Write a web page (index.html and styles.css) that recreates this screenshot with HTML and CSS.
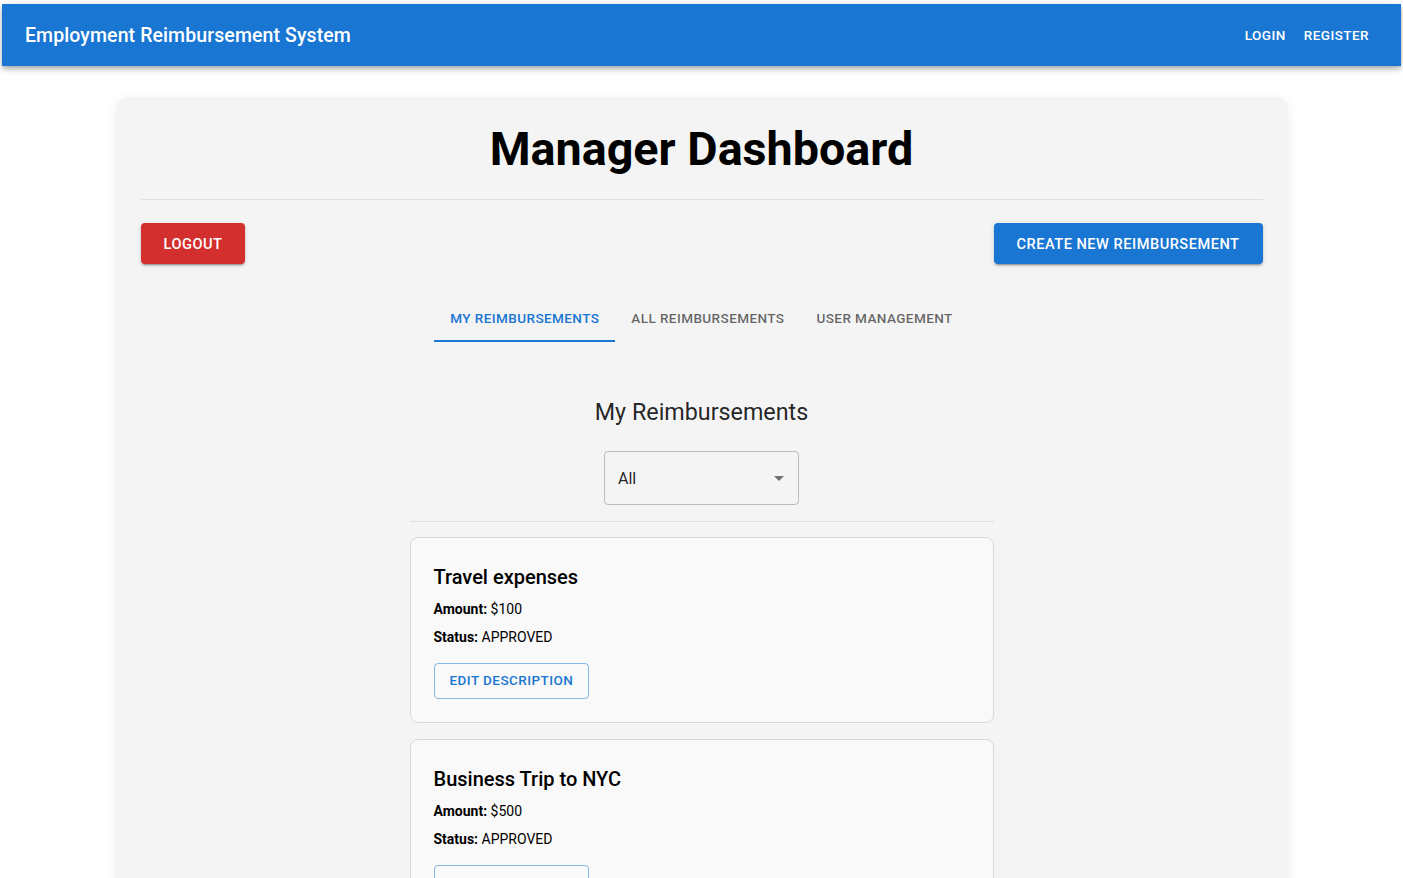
FILE: index.html
```html
<!DOCTYPE html>
<html lang="en">
<head>
<meta charset="utf-8">
<title>Manager Dashboard</title>
<link rel="stylesheet" href="styles.css">
</head>
<body>
<header class="appbar">
  <div class="brand">Employment Reimbursement System</div>
  <nav class="nav">
    <a class="nav-btn">LOGIN</a>
    <a class="nav-btn">REGISTER</a>
  </nav>
</header>
<main class="paper">
  <h1 class="page-title">Manager Dashboard</h1>
  <hr class="divider">
  <div class="actions">
    <button class="btn btn-red">LOGOUT</button>
    <button class="btn btn-blue">CREATE NEW REIMBURSEMENT</button>
  </div>
  <div class="tabs">
    <div class="tab active">MY REIMBURSEMENTS</div>
    <div class="tab">ALL REIMBURSEMENTS</div>
    <div class="tab">USER MANAGEMENT</div>
  </div>
  <section class="list">
    <h2 class="section-title">My Reimbursements</h2>
    <div class="select-wrap">
      <div class="select">
        <span>All</span>
        <svg class="caret" width="24" height="24" viewBox="0 0 24 24"><path d="M7 10l5 5 5-5z" fill="rgba(0,0,0,0.54)"/></svg>
      </div>
    </div>
    <hr class="divider list-divider">
    <div class="card">
      <div class="card-title">Travel expenses</div>
      <p class="line first"><b>Amount:</b> $100</p>
      <p class="line"><b>Status:</b> APPROVED</p>
      <button class="btn-outline">EDIT DESCRIPTION</button>
    </div>
    <div class="card">
      <div class="card-title">Business Trip to NYC</div>
      <p class="line first"><b>Amount:</b> $500</p>
      <p class="line"><b>Status:</b> APPROVED</p>
      <button class="btn-outline">EDIT DESCRIPTION</button>
    </div>
  </section>
</main>
</body>
</html>
```

FILE: styles.css
```css
* { box-sizing: border-box; }
html, body { margin: 0; padding: 0; background: #fff; }
body {
  font-family: Roboto, "Liberation Sans", Arial, sans-serif;
  color: rgba(0,0,0,0.87);
  height: 878px;
  overflow: hidden;
}
.appbar {
  margin: 4px 2px 0;
  height: 62px;
  background: #1976d2;
  color: #fff;
  display: flex;
  align-items: center;
  justify-content: space-between;
  padding: 0 24px 0 23px;
  box-shadow: 0 2px 4px -1px rgba(0,0,0,0.2), 0 4px 5px 0 rgba(0,0,0,0.14), 0 1px 10px 0 rgba(0,0,0,0.12);
}
.brand {
  font-size: 19.5px;
  font-weight: 500;
  letter-spacing: 0.1px;
}
.nav { display: flex; gap: 2px; }
.nav-btn {
  font-size: 13.5px;
  font-weight: 500;
  letter-spacing: 0.45px;
  padding: 6px 8px;
  color: #fff;
}
.paper {
  width: 1172px;
  margin: 31px auto 0;
  background: #f4f4f4;
  border-radius: 12px;
  padding: 24px 25px;
  box-shadow: 0 3px 12px rgba(0,0,0,0.07);
  min-height: 900px;
}
.page-title {
  margin: 0;
  text-align: center;
  font-size: 46.7px;
  font-weight: 700;
  color: #000;
  line-height: 56px;
  padding: 0 0 22px;
}
.divider {
  border: 0;
  height: 1px;
  background: #e0e0e0;
  margin: 0;
}
.actions {
  display: flex;
  justify-content: space-between;
  margin-top: 23px;
}
.btn {
  border: 0;
  border-radius: 4px;
  height: 41px;
  padding: 0 23px;
  font-family: inherit;
  font-size: 14.6px;
  font-weight: 500;
  letter-spacing: 0.5px;
  color: #fff;
  box-shadow: 0 3px 1px -2px rgba(0,0,0,0.2), 0 2px 2px 0 rgba(0,0,0,0.14), 0 1px 5px 0 rgba(0,0,0,0.12);
}
.btn-red { background: #d32f2f; }
.btn-blue { background: #1976d2; }
.tabs {
  display: flex;
  justify-content: center;
  margin-top: 30px;
}
.tab {
  height: 48px;
  padding: 2px 16px 0;
  display: flex;
  align-items: center;
  font-size: 13.55px;
  font-weight: 500;
  letter-spacing: 0.4px;
  color: rgba(0,0,0,0.6);
  border-bottom: 2px solid transparent;
}
.tab.active { color: #1976d2; border-bottom-color: #1976d2; }
.list {
  width: 584px;
  margin: 0 auto;
}
.section-title {
  margin: 54px 0 0;
  text-align: center;
  font-size: 23.3px;
  font-weight: 400;
  line-height: 32px;
  color: rgba(0,0,0,0.87);
}
.select-wrap { display: flex; justify-content: center; margin-top: 23px; }
.select {
  width: 195px;
  height: 54px;
  border: 1px solid rgba(0,0,0,0.23);
  border-radius: 4px;
  display: flex;
  align-items: center;
  justify-content: space-between;
  padding: 0 7px 0 13px;
  font-size: 16px;
}
.list-divider { margin-top: 16px; }
.card {
  margin-top: 15px;
  background: #f9f9f9;
  border: 1px solid #d9d9d9;
  border-radius: 8px;
  padding: 24px 23px 23px;
}
.card + .card { margin-top: 16px; }
.card-title {
  font-size: 20px;
  font-weight: 500;
  line-height: 30px;
  color: #000;
}
.line {
  margin: 0;
  font-size: 14px;
  line-height: 28px;
  color: #000;
}
.line.first { margin-top: 3px; }
.line b { font-weight: 700; }
.btn-outline {
  margin-top: 12px;
  height: 36px;
  padding: 0 15px 2px;
  background: transparent;
  border: 1px solid rgba(25,118,210,0.5);
  border-radius: 4px;
  font-family: inherit;
  font-size: 13.5px;
  font-weight: 500;
  letter-spacing: 0.45px;
  color: #1976d2;
}
```
